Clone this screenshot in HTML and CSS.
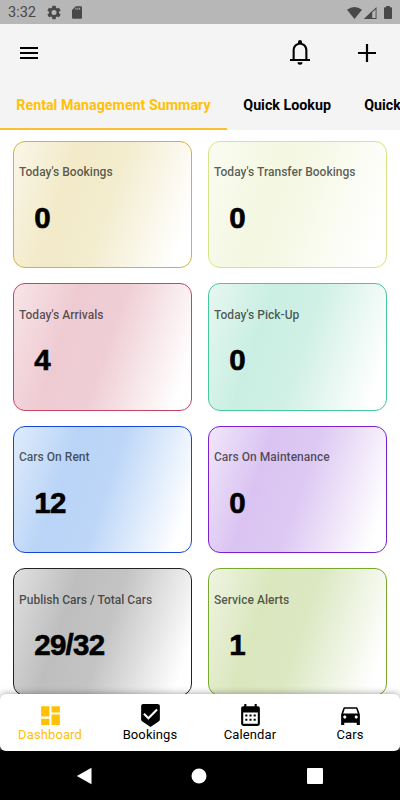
FILE: index.html
```html
<!DOCTYPE html>
<html lang="en">
<head>
  <meta charset="UTF-8" />
  <meta name="viewport" content="width=device-width, initial-scale=1.0"/>
  <title>Rental Management</title>
  <link rel="stylesheet" href="styles.css">
</head>
<body>
  <div class="status-bar">
    <span class="time">3:32</span>
    <svg class="gear" width="15" height="15" viewBox="2 2 20 20"><path d="M19.14 12.94c.04-.3.06-.61.06-.94s-.02-.64-.07-.94l2.03-1.58a.49.49 0 0 0 .12-.61l-1.92-3.32a.49.49 0 0 0-.59-.22l-2.39.96a7 7 0 0 0-1.62-.94l-.36-2.54a.48.48 0 0 0-.48-.41h-3.84a.48.48 0 0 0-.47.41l-.36 2.54a7 7 0 0 0-1.62.94l-2.39-.96a.49.49 0 0 0-.59.22L2.74 8.87a.49.49 0 0 0 .12.61l2.03 1.58a6 6 0 0 0 0 1.88l-2.03 1.58a.49.49 0 0 0-.12.61l1.92 3.32c.12.22.37.29.59.22l2.39-.96c.5.38 1.03.7 1.62.94l.36 2.54c.05.24.24.41.48.41h3.84c.24 0 .44-.17.47-.41l.36-2.54a7 7 0 0 0 1.62-.94l2.39.96c.22.08.47 0 .59-.22l1.92-3.32a.49.49 0 0 0-.12-.61zM12 15.6A3.6 3.6 0 1 1 12 8.4a3.6 3.6 0 0 1 0 7.2z"/></svg>
    <svg class="sd" width="10" height="13" viewBox="4 2 16 20"><path d="M18 2h-8L4 8v12c0 1.100.9 2 2 2h12c1.100 0 2-.9 2-2V4c0-1.100-.9-2-2-2z"/><path class="sd-pins" d="M9.500 4.500h1.500v3H9.500zM12.500 4.500H14v3h-1.500zM15.500 4.500H17v3h-1.500z"/></svg>
    <div class="signals">
      <svg width="15" height="12" viewBox="0 0 15 12"><path d="M0 2.800Q7.500-2.800 15 2.800L7.500 12z"/></svg>
      <svg width="13" height="12" viewBox="0 0 13 12"><path d="M8 4.200V12H0z"/><path d="M12.500 0v12H0zM11.600 2.200 8.200 5.500v5.600h3.400z" fill-rule="evenodd"/></svg>
      <svg class="battery" width="8" height="13" viewBox="0 0 8 13"><path d="M2.200 0h3.600v1.300H7a1 1 0 0 1 1 1V12a1 1 0 0 1-1 1H1a1 1 0 0 1-1-1V2.300a1 1 0 0 1 1-1h1.200z"/></svg>
    </div>
  </div>

  <header class="top">
    <div class="toolbar">
      <svg class="menu" width="18" height="12" viewBox="3 6 18 12"><path d="M3 18h18v-2H3v2zm0-5h18v-2H3v2zm0-7v2h18V6H3z"/></svg>
      <svg class="bell" width="20" height="25" viewBox="0 0 20 25"><path d="M8 3.100V2a2 2 0 0 1 4 0v1.100c3.600.9 5.400 3.900 5.400 7.300V19H20v2H0v-2h2.600v-8.600C2.600 7 4.400 4 8 3.100zM4.700 19h10.600v-8.500c0-3.400-2.100-5.700-5.300-5.700s-5.300 2.300-5.300 5.700zM7.500 22.300h5a2.500 2.500 0 0 1-5 0z"/></svg>
      <svg class="plus" width="18" height="18" viewBox="0 0 18 18"><path d="M7.900 0h2.200v7.900H18v2.200h-7.900V18H7.900v-7.900H0V7.900h7.900z"/></svg>
    </div>
    <nav class="tabs">
      <a class="tab active">Rental Management Summary</a>
      <a class="tab">Quick Lookup</a>
      <a class="tab">Quick</a>
    </nav>
  </header>

  <main class="cards">
    <div class="card bookings"><h2>Today's Bookings</h2><p>0</p></div>
    <div class="card transfers"><h2>Today's Transfer Bookings</h2><p>0</p></div>
    <div class="card arrivals"><h2>Today's Arrivals</h2><p>4</p></div>
    <div class="card pickup"><h2>Today's Pick-Up</h2><p>0</p></div>
    <div class="card rent"><h2>Cars On Rent</h2><p>12</p></div>
    <div class="card maintenance"><h2>Cars On Maintenance</h2><p>0</p></div>
    <div class="card total"><h2>Publish Cars / Total Cars</h2><p>29/32</p></div>
    <div class="card alerts"><h2>Service Alerts</h2><p>1</p></div>
  </main>

  <div class="bottom">
    <nav class="bottom-nav">
      <a class="item active">
        <svg width="25" height="25" viewBox="0 0 24 24"><path d="M3 13h8V3H3v10zm0 8h8v-6H3v6zm10 0h8V11h-8v10zm0-18v6h8V3h-8z"/></svg>
        <span>Dashboard</span>
      </a>
      <a class="item">
        <svg width="25" height="25" viewBox="0 0 24 24"><path d="M19 1H5c-1.100 0-1.990.9-1.990 2L3 15.930c0 .69.350 1.300.880 1.660L12 23l8.110-5.410c.53-.36.880-.97.880-1.660L21 3c0-1.100-.9-2-2-2zm-9 15l-5-5 1.410-1.410L10 13.170l7.590-7.590L19 7l-9 9z"/></svg>
        <span>Bookings</span>
      </a>
      <a class="item">
        <svg width="25" height="25" viewBox="0 0 24 24"><path fill-rule="evenodd" d="M5 3h1V1h2v2h8V1h2v2h1a2 2 0 0 1 2 2v15a2 2 0 0 1-2 2H5a2 2 0 0 1-2-2V5a2 2 0 0 1 2-2zm0 6v11h14V9z"/><path d="M7 11h2v2H7zm4 0h2v2h-2zm4 0h2v2h-2zm-8 4h2v2H7zm4 0h2v2h-2zm4 0h2v2h-2z"/></svg>
        <span>Calendar</span>
      </a>
      <a class="item">
        <svg width="25" height="25" viewBox="0 0 24 24"><path d="M18.920 5.010C18.720 4.420 18.160 4 17.500 4h-11c-.66 0-1.210.42-1.420 1.010L3 11v10h3v-2h12v2h3V11l-2.080-5.990zM6.500 15c-.83 0-1.500-.67-1.500-1.500S5.670 12 6.500 12s1.500.67 1.500 1.500S7.330 15 6.500 15zm11 0c-.83 0-1.500-.67-1.500-1.500s.67-1.500 1.500-1.500 1.500.67 1.500 1.500-.67 1.500-1.500 1.500zM5 10l1.500-4.500h11L19 10H5z"/></svg>
        <span>Cars</span>
      </a>
    </nav>
    <div class="system-nav">
      <svg width="16" height="18" viewBox="0 0 16 18"><path d="M15.500 .8v16.400L.8 9z"/></svg>
      <svg width="16" height="16" viewBox="0 0 16 16"><circle cx="8" cy="8" r="7.500"/></svg>
      <svg width="16" height="16" viewBox="0 0 16 16"><rect width="16" height="16" rx="1"/></svg>
    </div>
  </div>
</body>
</html>
```
FILE: styles.css
```css
* {
  box-sizing: border-box;
}

body {
  margin: 0;
  height: 800px;
  display: flex;
  flex-direction: column;
  overflow: hidden;
  background: #fff;
  color: #000;
  font-family: Roboto, sans-serif;
}

svg {
  display: block;
  flex: none;
}

.status-bar {
  height: 24px;
  flex: none;
  display: flex;
  align-items: center;
  padding: 1px 8px 0;
  background: #b7b7b7;
  color: #484848;
  fill: #484848;
}

.time {
  width: 39px;
  font-size: 14.5px;
}

.gear {
  width: 14px;
  margin-right: 11px;
}

.sd-pins {
  fill: #b7b7b7;
}

.signals {
  display: flex;
  align-items: center;
  margin-left: auto;
  gap: 2px;
}

.battery {
  margin-left: 5px;
}

.top {
  height: 106px;
  flex: none;
  background: #f4f4f4;
}

.toolbar {
  height: 57px;
  display: flex;
  align-items: center;
  padding: 0 24px 0 19.500px;
}

.bell {
  margin: -1px 48px 0 auto;
}

.tabs {
  height: 49px;
  display: flex;
  overflow: hidden;
}

.tab {
  flex: none;
  padding: 15px 17px 0 16.300px;
  font-size: 14.27px;
  line-height: 18px;
  font-weight: 700;
  white-space: nowrap;
}

.tab.active {
  color: #ffc107;
  width: 227px;
  border-bottom: 2px solid #fbc02d;
}

.cards {
  flex: 1;
  min-height: 0;
  display: grid;
  grid-template-columns: 179.500px 179.500px;
  grid-auto-rows: 127.500px;
  gap: 15.100px 15.500px;
  padding: 10.500px 12.500px 0;
  overflow: hidden;
}

.card {
  padding: 22.500px 5.500px 0;
  border: 1px solid;
  border-radius: 12px;
}

.card h2 {
  margin: 0;
  color: rgba(0, 0, 0, 0.65);
  font-size: 12.05px;
  line-height: 16px;
  font-weight: 500;
  white-space: nowrap;
}

.card p {
  margin: 19.500px 0 0 15.300px;
  font: 700 29.500px/36px "Liberation Sans", sans-serif;
  letter-spacing: -0.75px;
  -webkit-text-stroke: 0.6px #000;
}

.bookings {
  border-color: #d1b52d;
  background: linear-gradient(109deg, #faf6e8, #f2eac8 30%, #f3ecce 52%, #fff 92%);
}

.transfers {
  border-color: #d4e486;
  background: linear-gradient(109deg, #fafcf2, #f4f7e1 35%, #f6f9e7 52%, #fff 92%);
}

.arrivals {
  border-color: #c84463;
  background: linear-gradient(109deg, #f8e5e9, #eecbd2 30%, #efced5 52%, #fff 92%);
}

.pickup {
  border-color: #45c89c;
  background: linear-gradient(109deg, #e6f7f1, #caefe2 30%, #d0f0e5 52%, #fff 92%);
}

.rent {
  border-color: #1745dc;
  background: linear-gradient(109deg, #dfebfc, #b9d4f7 30%, #bed7f8 52%, #fff 92%);
}

.maintenance {
  border-color: #7622d1;
  background: linear-gradient(109deg, #f1e6fa, #dac3f2 30%, #dec9f3 52%, #fff 92%);
}

.total {
  border-color: #222;
  background: linear-gradient(109deg, #e0e0e0, #bebebe 30%, #c4c4c4 52%, #fff 92%);
}

.alerts {
  border-color: #79a82e;
  background: linear-gradient(109deg, #eff4e2, #dae7bd 30%, #dce8c3 52%, #fff 92%);
}

.bottom {
  flex: none;
  position: relative;
  background: linear-gradient(#fff 50px, #000 57px);
}

.bottom-nav {
  height: 57px;
  display: grid;
  grid-template-columns: repeat(4, 1fr);
  border-radius: 6px;
  background: #fff;
  box-shadow: 0 0 7px rgba(0, 0, 0, 0.4);
}

.item {
  display: flex;
  flex-direction: column;
  align-items: center;
  padding-top: 9px;
  font-size: 13px;
  line-height: 16px;
  letter-spacing: 0.1px;
}

.item span {
  margin-top: -1px;
}

.item.active {
  color: #ffc107;
  fill: #ffc107;
}

.system-nav {
  height: 49px;
  display: flex;
  align-items: center;
  justify-content: space-between;
  padding: 0 77px 0 75.500px;
  background: #000;
  fill: #fff;
}
```
